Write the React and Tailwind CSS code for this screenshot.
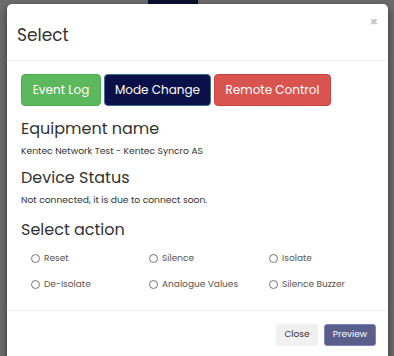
import { useState } from "react";

const actions = ["Reset", "Silence", "Isolate", "De-Isolate", "Analogue Values", "Silence Buzzer"];

export default function App() {
  const [picked, setPicked] = useState(null);

  return (
    <div className="relative h-[356px] w-[394px] overflow-hidden bg-[#6d6d6d] pl-[7px] pr-[6px] pt-[4px] font-['Poppins','Open_Sans',sans-serif] text-[#333]">
      <div className="absolute left-[148px] top-0 h-[4px] w-[50px] bg-[#0c0f2c]" />

      <div className="relative rounded-[5px] bg-white shadow-[0_3px_9px_rgba(0,0,0,0.5)]">
        <div className="flex h-[57px] items-start justify-between border-b border-[#eeeeee] pl-[10px] pr-[10px]">
          <h4 className="pt-[19px] text-[17px] leading-[24px] text-[#333]">Select</h4>
          <span className="pt-[9px] text-[13px] font-bold leading-[18px] text-[#c4c4c4]">×</span>
        </div>

        <div className="px-[14px] pt-[13px]">
          <div className="flex gap-[3px]">
            <button className="h-[32px] w-[80px] rounded-[4px] border border-[#4cae4c] bg-[#5cb85c] text-[12px] text-white">Event Log</button>
            <button className="h-[32px] w-[107px] rounded-[4px] border border-[#3b6e91] bg-[#0a1048] text-[12px] text-white">Mode Change</button>
            <button className="h-[32px] w-[117px] rounded-[4px] border border-[#c9403c] bg-[#d9534f] text-[12px] text-white">Remote Control</button>
          </div>

          <h3 className="mt-[11px] text-[16px] leading-[24px]">Equipment name</h3>
          <p className="mt-[3px] text-[9.2px] leading-[14px]">Kentec Network Test - Kentec Syncro AS</p>

          <h3 className="mt-[8px] text-[16px] leading-[24px]">Device Status</h3>
          <p className="mt-[3px] text-[9.2px] leading-[14px]">Not connected, it is due to connect soon.</p>

          <h3 className="mt-[11px] text-[16px] leading-[24px]">Select action</h3>

          <div className="mt-[9px] grid grid-cols-[118px_120px_110px] gap-y-[12px] pb-[19px] pl-[10px]">
            {actions.map((a) => (
              <label key={a} className="flex items-center gap-[4px] text-[9px] leading-[14px] text-[#555]">
                <input
                  type="radio"
                  name="action"
                  checked={picked === a}
                  onChange={() => setPicked(a)}
                  className="m-0 h-[9px] w-[9px] accent-[#0a1048]"
                />
                {a}
              </label>
            ))}
          </div>
        </div>

        <div className="flex justify-end gap-[6px] border-t border-[#eeeeee] px-[12px] pb-[20px] pt-[13px]">
          <button className="h-[22px] w-[42px] rounded-[3px] bg-[#f0f0f0] text-[9px] text-[#333]">Close</button>
          <button className="h-[22px] w-[52px] rounded-[3px] border border-[#7e84b8] bg-[#5a5e8b] text-[9px] text-white">Preview</button>
        </div>
      </div>
    </div>
  );
}
